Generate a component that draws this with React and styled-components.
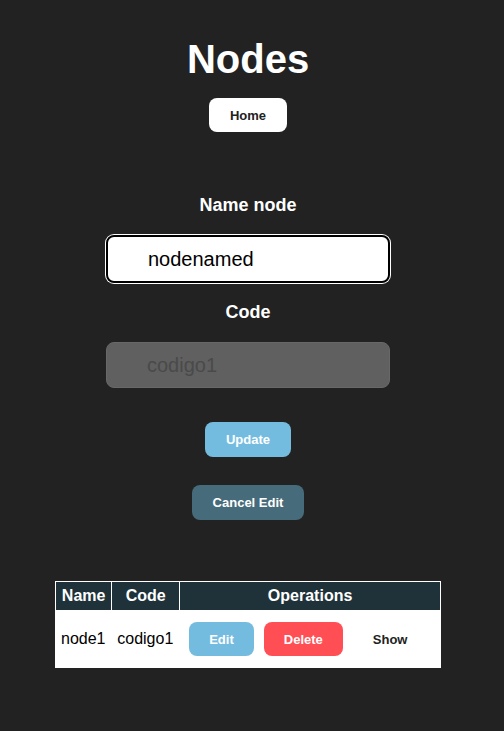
import React from "react";
import styled, { createGlobalStyle } from "styled-components";

const GlobalStyle = createGlobalStyle`
  body {
    margin: 0;
    background-color: #222222;
    font-family: "Liberation Sans", Arial, sans-serif;
  }
`;

const Page = styled.div`
  width: 496px;
  padding: 36px 0px 64px;
  display: flex;
  flex-direction: column;
  align-items: center;
  color: #ffffff;
`;

const Title = styled.h1`
  margin: 0px 0px 16px;
  font-size: 40px;
  line-height: 46px;
  font-weight: bold;
`;

const Button = styled.button`
  box-sizing: border-box;
  height: ${(props) => props.h || 35}px;
  padding: 0px 20px;
  border: ${(props) => (props.flat ? "none" : "1px solid transparent")};
  border-radius: 8px;
  font-family: "Liberation Sans", Arial, sans-serif;
  font-size: 13px;
  font-weight: bold;
  color: ${(props) => props.color || "#ffffff"};
  background-color: ${(props) => props.bg || "#ffffff"};
  cursor: pointer;
`;

const Form = styled.form`
  margin-top: 63px;
  display: flex;
  flex-direction: column;
  align-items: center;
`;

const Label = styled.label`
  font-size: 18px;
  line-height: 21px;
  font-weight: bold;
  margin-bottom: 19px;
`;

const Input = styled.input`
  box-sizing: border-box;
  width: 284px;
  height: ${(props) => (props.disabled ? 46 : 48)}px;
  padding: 0px 0px 0px 40px;
  margin-bottom: ${(props) => (props.disabled ? 34 : 19)}px;
  border-radius: 8px;
  font-family: "Liberation Sans", Arial, sans-serif;
  font-size: 20px;
  outline: none;
  border: ${(props) => (props.disabled ? "1px solid #686868" : "2px solid #000000")};
  box-shadow: ${(props) => (props.disabled ? "none" : "0 0 0 1px #ffffff")};
  background-color: ${(props) => (props.disabled ? "#606060" : "#ffffff")};
  color: ${(props) => (props.disabled ? "#4a4a4a" : "#000000")};
  caret-color: #000000;
`;

const Actions = styled.div`
  display: flex;
  flex-direction: column;
  align-items: center;
  gap: 28px;
`;

const Table = styled.table`
  margin-top: 61px;
  width: 386px;
  border-collapse: collapse;
  font-size: 16px;

  th {
    height: 28px;
    padding: 0px 5px;
    background-color: #1f323a;
    color: #ffffff;
    border: 1px solid #ffffff;
    font-weight: bold;
  }

  td {
    height: 56px;
    padding: 0px 5px;
    background-color: #ffffff;
    color: #000000;
    border: 1px solid #ffffff;
  }
`;

const OpsCell = styled.td`
  && {
    padding: 0px 9px;
  }

  div {
    display: flex;
    gap: 10px;
    align-items: center;
  }
`;

function App() {
  return (
    <Page>
      <GlobalStyle />
      <Title>Nodes</Title>
      <Button color="#222222" h={34}>Home</Button>

      <Form onSubmit={(e) => e.preventDefault()}>
        <Label htmlFor="name">Name node</Label>
        <Input id="name" defaultValue="nodenamed" autoFocus />
        <Label htmlFor="code">Code</Label>
        <Input id="code" defaultValue="codigo1" disabled />
        <Actions>
          <Button bg="#74bcdf">Update</Button>
          <Button bg="#466b7a" type="button">Cancel Edit</Button>
        </Actions>
      </Form>

      <Table>
        <thead>
          <tr>
            <th>Name</th>
            <th>Code</th>
            <th>Operations</th>
          </tr>
        </thead>
        <tbody>
          <tr>
            <td>node1</td>
            <td>codigo1</td>
            <OpsCell>
              <div>
                <Button flat h={34} bg="#74bcdf">Edit</Button>
                <Button flat h={34} bg="#ff4f55">Delete</Button>
                <Button flat h={34} color="#222222">Show</Button>
              </div>
            </OpsCell>
          </tr>
        </tbody>
      </Table>
    </Page>
  );
}

export default App;
